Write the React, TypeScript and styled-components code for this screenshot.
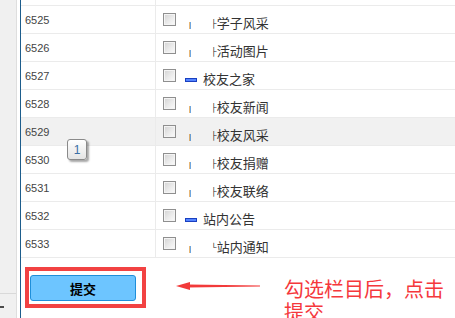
import React from "react";
import styled, { createGlobalStyle } from "styled-components";

const Global = createGlobalStyle`
  html, body { margin: 0; padding: 0; background: #ffffff; }
  body { width: 455px; height: 318px; overflow: hidden; font-family: "Liberation Sans", Arial, sans-serif; }
`;

const Page = styled.div`
  display: flex;
  width: 455px;
  height: 318px;
  overflow: hidden;
  background: #ffffff;
`;

const SideStrip = styled.div`
  width: 17px;
  flex: none;
  background: #f0f0f0;
  border-right: 1px solid #dedede;
  display: flex;
  flex-direction: column;
  padding-top: 293px;
  box-sizing: border-box;
`;

const SideRule = styled.div`
  height: 1px;
  background: #d9d9d9;
`;

const SideMark = styled.div`
  margin-top: 12px;
  width: 4px;
  height: 2px;
  background: #4a4a4a;
`;

const Gutter = styled.div`
  width: 3px;
  flex: none;
`;

const Main = styled.div`
  position: relative;
  flex: 1;
  border-left: 1px solid #1d5d8c;
  display: flex;
  flex-direction: column;
`;

const Table = styled.div`
  display: flex;
  flex-direction: column;
`;

const Row = styled.div<{ $stub?: boolean; $hover?: boolean }>`
  display: grid;
  grid-template-columns: 135px 1fr;
  height: ${(p) => (p.$stub ? "5px" : "27px")};
  border-bottom: 1px solid #ebebeb;
  background: ${(p) => (p.$hover ? "#f1f1f1" : "transparent")};
`;

const IdCell = styled.div`
  border-right: 1px solid #ebebeb;
  display: flex;
  align-items: center;
  padding-left: 4px;
  font-family: "Liberation Sans", Arial, sans-serif;
  font-size: 11px;
  color: #444444;
`;

const NameCell = styled.div`
  display: flex;
  align-items: center;
  padding-left: 7px;
`;

const CheckBox = styled.span`
  width: 13px;
  height: 13px;
  box-sizing: border-box;
  flex: none;
  border: 1px solid #8f8f8f;
  background: linear-gradient(135deg, #d2d2d2 0%, #ebebeb 55%, #fbfbfb 100%);
  box-shadow: inset 0 0 0 1px #f4f4f4;
`;

const Tree = styled.div`
  display: flex;
  align-items: center;
  padding-top: 6px;
`;

const Pipe = styled.span`
  width: 22px;
  height: 8px;
  flex: none;
  margin-left: 13px;
  margin-top: 5px;
  font-family: "Liberation Sans", Arial, sans-serif;
  font-size: 8px;
  line-height: 8px;
  color: #000000;
`;

const Elbow = styled.span`
  flex: none;
  height: 9px;
  margin-top: 2px;
  font-family: "Liberation Sans", Arial, sans-serif;
  font-size: 8px;
  line-height: 9px;
  color: #111111;
`;

const Dash = styled.span`
  width: 12px;
  height: 4px;
  box-sizing: border-box;
  margin-left: 9px;
  margin-right: 6px;
  margin-top: 2px;
  border: 1px solid #1a3fc0;
  background: #5485ff;
  flex: none;
`;

const Label = styled.span`
  font-family: "Noto Sans CJK SC", "Noto Sans", sans-serif;
  font-size: 13px;
  line-height: 14px;
  color: #333333;
`;

const Tip = styled.div`
  position: absolute;
  left: 46px;
  top: 139px;
  width: 20px;
  height: 21px;
  box-sizing: border-box;
  border: 1px solid #8a8a8a;
  border-radius: 3px;
  background: linear-gradient(#ffffff, #e4e4e4);
  box-shadow: 2px 2px 2px rgba(0, 0, 0, 0.35);
  display: flex;
  align-items: center;
  justify-content: center;
  font-family: "Liberation Sans", Arial, sans-serif;
  font-size: 12px;
  color: #3a6ea5;
`;

const ActionBar = styled.div`
  display: flex;
  align-items: flex-start;
  padding-left: 4px;
  margin-top: 9px;
`;

const Highlight = styled.div`
  border: 4px solid #f24242;
  padding: 4px 6px 3px 1px;
  flex: none;
`;

const SubmitButton = styled.button`
  width: 106px;
  height: 26px;
  box-sizing: border-box;
  border: 1px solid #1f8fda;
  border-radius: 3px;
  background: #6dc5ff;
  font-family: "Noto Sans CJK SC", sans-serif;
  font-weight: bold;
  font-size: 13px;
  color: #000000;
  padding: 0;
  display: flex;
  align-items: center;
  justify-content: center;
`;

const Arrow = styled.svg`
  margin-left: 30px;
  margin-top: 14px;
  flex: none;
`;

const Note = styled.div`
  margin-left: 24px;
  margin-top: 10px;
  width: 166px;
  font-family: "Noto Sans CJK SC", sans-serif;
  font-size: 20px;
  line-height: 23px;
  color: #f5383c;
  flex: none;
`;

type Item = { id: number; label: string; level: 0 | 1; last?: boolean };

const items: Item[] = [
  { id: 6525, label: "学子风采", level: 1 },
  { id: 6526, label: "活动图片", level: 1 },
  { id: 6527, label: "校友之家", level: 0 },
  { id: 6528, label: "校友新闻", level: 1 },
  { id: 6529, label: "校友风采", level: 1 },
  { id: 6530, label: "校友捐赠", level: 1 },
  { id: 6531, label: "校友联络", level: 1 },
  { id: 6532, label: "站内公告", level: 0 },
  { id: 6533, label: "站内通知", level: 1, last: true },
];

export default function App() {
  return (
    <>
      <Global />
      <Page>
        <SideStrip>
          <SideRule />
          <SideMark />
        </SideStrip>
        <Gutter />
        <Main>
          <Table>
            <Row $stub>
              <IdCell />
              <NameCell />
            </Row>
            {items.map((it) => (
              <Row key={it.id} $hover={it.id === 6529}>
                <IdCell>{it.id}</IdCell>
                <NameCell>
                  <CheckBox />
                  {it.level === 1 ? (
                    <Tree>
                      <Pipe>|</Pipe>
                      <Elbow>{it.last ? "└" : "├"}</Elbow>
                      <Label>{it.label}</Label>
                    </Tree>
                  ) : (
                    <Tree>
                      <Dash />
                      <Label>{it.label}</Label>
                    </Tree>
                  )}
                </NameCell>
              </Row>
            ))}
          </Table>
          <Tip>1</Tip>
          <ActionBar>
            <Highlight>
              <SubmitButton>提交</SubmitButton>
            </Highlight>
            <Arrow width="84" height="10" viewBox="0 0 84 10">
              <polygon points="0,5 14,1 14,9" fill="#f23a3a" />
              <polygon points="12,3.4 84,4.6 84,5.4 12,6.6" fill="#f23a3a" />
            </Arrow>
            <Note>勾选栏目后，点击提交</Note>
          </ActionBar>
        </Main>
      </Page>
    </>
  );
}
